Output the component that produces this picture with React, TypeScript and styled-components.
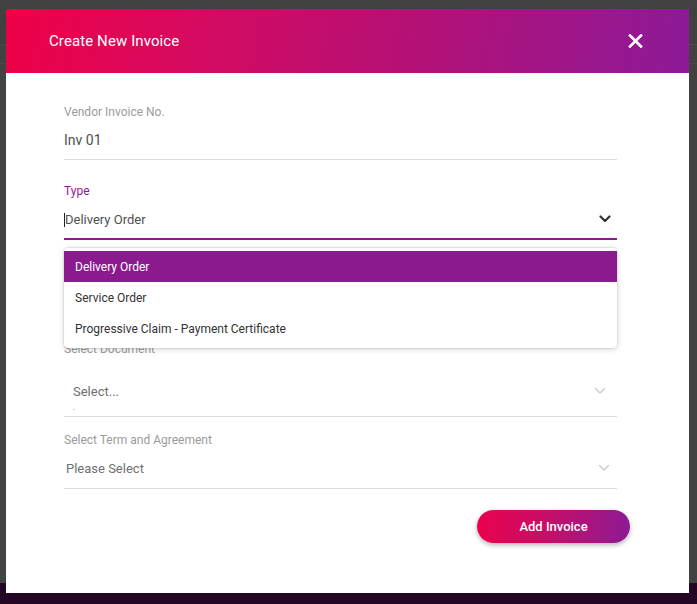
import React from 'react'
import styled, { createGlobalStyle } from 'styled-components'

const GlobalStyle = createGlobalStyle`
  html, body {
    margin: 0;
    padding: 0;
    width: 100%;
    height: 100%;
  }
  body {
    font-family: Roboto, "Liberation Sans", Arial, sans-serif;
    background: #424242;
  }
  #root {
    height: 100%;
  }
`

const Page = styled.div`
  position: relative;
  display: flex;
  flex-direction: column;
  width: 100%;
  height: 604px;
  overflow: hidden;
  background: #424242;
`

const PageBar = styled.div`
  height: 44px;
  border-bottom: 1px solid #4a4a4a;
  background: #414141;
`

const PageBand = styled.div`
  height: 18px;
  border-bottom: 1px solid #4b4b4b;
`

const PageBody = styled.div`
  flex: 1;
`

const PageFooter = styled.div`
  height: 21px;
  background: #230724;
`

const Modal = styled.div`
  position: absolute;
  top: 9px;
  left: 6px;
  width: 683px;
  height: 584px;
  display: flex;
  flex-direction: column;
  background: #fff;
`

const Header = styled.div`
  display: flex;
  align-items: center;
  justify-content: space-between;
  height: 64px;
  padding: 0 46px 0 43px;
  background: linear-gradient(100deg, #ef0047 0%, #d30b62 30%, #b21178 62%, #8c1a98 100%);
  color: #fff;
`

const Title = styled.div`
  font-size: 15px;
  font-weight: 400;
  letter-spacing: 0.1px;
`

const Close = styled.div`
  display: flex;
  width: 16px;
  height: 16px;
  align-items: center;
  justify-content: center;
`

const Body = styled.div`
  display: flex;
  flex-direction: column;
  padding: 31px 59px 0 58px;
`

const Field = styled.div<{ gapTop?: number }>`
  position: relative;
  display: flex;
  flex-direction: column;
  margin-right: 13px;
  margin-top: ${ props => props.gapTop ?? 0 }px;
`

const Label = styled.div<{ active?: boolean }>`
  height: 16px;
  line-height: 16px;
  font-size: 12px;
  color: ${ props => props.active ? '#8e1a93' : '#9b9b9b' };
`

const Control = styled.div<{ active?: boolean; tall?: boolean; h?: number }>`
  position: relative;
  display: flex;
  align-items: ${ props => props.tall ? 'flex-start' : 'center' };
  justify-content: space-between;
  height: ${ props => props.h ?? 41 }px;
  padding: ${ props => props.tall ? '24px 0 0 9px' : '0' };
  box-sizing: border-box;
  border-bottom: ${ props => props.active ? '2px solid #8e1a93' : '1px solid #dcdcdc' };
`

const Value = styled.div<{ size?: number; muted?: boolean; indent?: number; drop?: number }>`
  display: flex;
  align-items: center;
  height: 20px;
  margin-top: ${ props => props.drop ?? 0 }px;
  padding-left: ${ props => props.indent ?? 0 }px;
  font-size: ${ props => props.size ?? 13 }px;
  color: ${ props => props.muted ? '#6f6f6f' : '#505050' };
`

const Caret = styled.span`
  display: inline-block;
  width: 1px;
  height: 14px;
  background: #222;
`

const Chevron = styled.div<{ offset?: number; drop?: number }>`
  display: flex;
  margin-right: ${ props => props.offset ?? 7 }px;
  margin-top: ${ props => props.drop ?? 0 }px;
`

const InputDot = styled.span`
  position: absolute;
  left: 9px;
  bottom: 6px;
  width: 2px;
  height: 1px;
  background: #d0d0d0;
`

const Menu = styled.div`
  position: absolute;
  top: 65px;
  left: 0;
  right: 0;
  z-index: 2;
  display: flex;
  flex-direction: column;
  padding: 3px 0 4px;
  border-radius: 4px;
  background: #fff;
  box-shadow: 0 1px 6px rgba(0, 0, 0, 0.18), 0 0 0 1px rgba(0, 0, 0, 0.06);
`

const Option = styled.div<{ selected?: boolean }>`
  display: flex;
  align-items: center;
  height: 31px;
  padding-left: 11px;
  font-size: 12px;
  color: ${ props => props.selected ? '#fff' : '#333' };
  background: ${ props => props.selected ? '#8b1a8f' : 'transparent' };
`

const Actions = styled.div`
  display: flex;
  justify-content: flex-end;
  margin-top: 21px;
`

const Button = styled.div`
  display: flex;
  align-items: center;
  justify-content: center;
  width: 153px;
  height: 33px;
  border-radius: 17px;
  background: linear-gradient(90deg, #ea024d 0%, #c80e67 45%, #8c1a95 100%);
  box-shadow: 0 2px 5px rgba(0, 0, 0, 0.3);
  color: #fff;
  font-size: 13px;
  font-weight: 500;
`

const ChevronIcon = ({ color, width = 2 }: { color: string; width?: number }) => (
  <svg width='12' height='8' viewBox='0 0 12 8'>
    <polyline points='1.5,1.5 6,6 10.5,1.5' fill='none' stroke={ color } strokeWidth={ width } strokeLinecap='round' strokeLinejoin='round' />
  </svg>
)

const options = ['Delivery Order', 'Service Order', 'Progressive Claim - Payment Certificate']

const App = () => {
  return (
    <Page>
      <GlobalStyle />
      <PageBar />
      <PageBand />
      <PageBody />
      <PageFooter />
      <Modal>
        <Header>
          <Title>Create New Invoice</Title>
          <Close>
            <svg width='15' height='14' viewBox='0 0 15 14'>
              <path d='M2 1.5 L13 12.5 M13 1.5 L2 12.5' stroke='#fff' strokeWidth='2.6' strokeLinecap='square' />
            </svg>
          </Close>
        </Header>
        <Body>
          <Field>
            <Label>Vendor Invoice No.</Label>
            <Control h={ 40 }>
              <Value size={ 14 }>Inv 01</Value>
            </Control>
          </Field>
          <Field gapTop={ 23 }>
            <Label active>Type</Label>
            <Control active h={ 41 }>
              <Value drop={ 2 }><Caret />Delivery Order</Value>
              <Chevron offset={ 6 }><ChevronIcon color='#333' width={ 2.2 } /></Chevron>
            </Control>
            <Menu>
              { options.map((o, i) => (
                <Option key={ o } selected={ i === 0 }>{ o }</Option>
              )) }
            </Menu>
          </Field>
          <Field gapTop={ 101 }>
            <Label>Select Document</Label>
            <Control tall h={ 60 }>
              <Value muted>Select...</Value>
              <Chevron offset={ 11 } drop={ 6 }><ChevronIcon color='#cfcfcf' width={ 1.6 } /></Chevron>
              <InputDot />
            </Control>
          </Field>
          <Field gapTop={ 15 }>
            <Label>Select Term and Agreement</Label>
            <Control h={ 41 }>
              <Value indent={ 2 } muted>Please Select</Value>
              <Chevron offset={ 7 }><ChevronIcon color='#cfcfcf' width={ 1.6 } /></Chevron>
            </Control>
          </Field>
          <Actions>
            <Button>Add Invoice</Button>
          </Actions>
        </Body>
      </Modal>
    </Page>
  )
}

export default App
